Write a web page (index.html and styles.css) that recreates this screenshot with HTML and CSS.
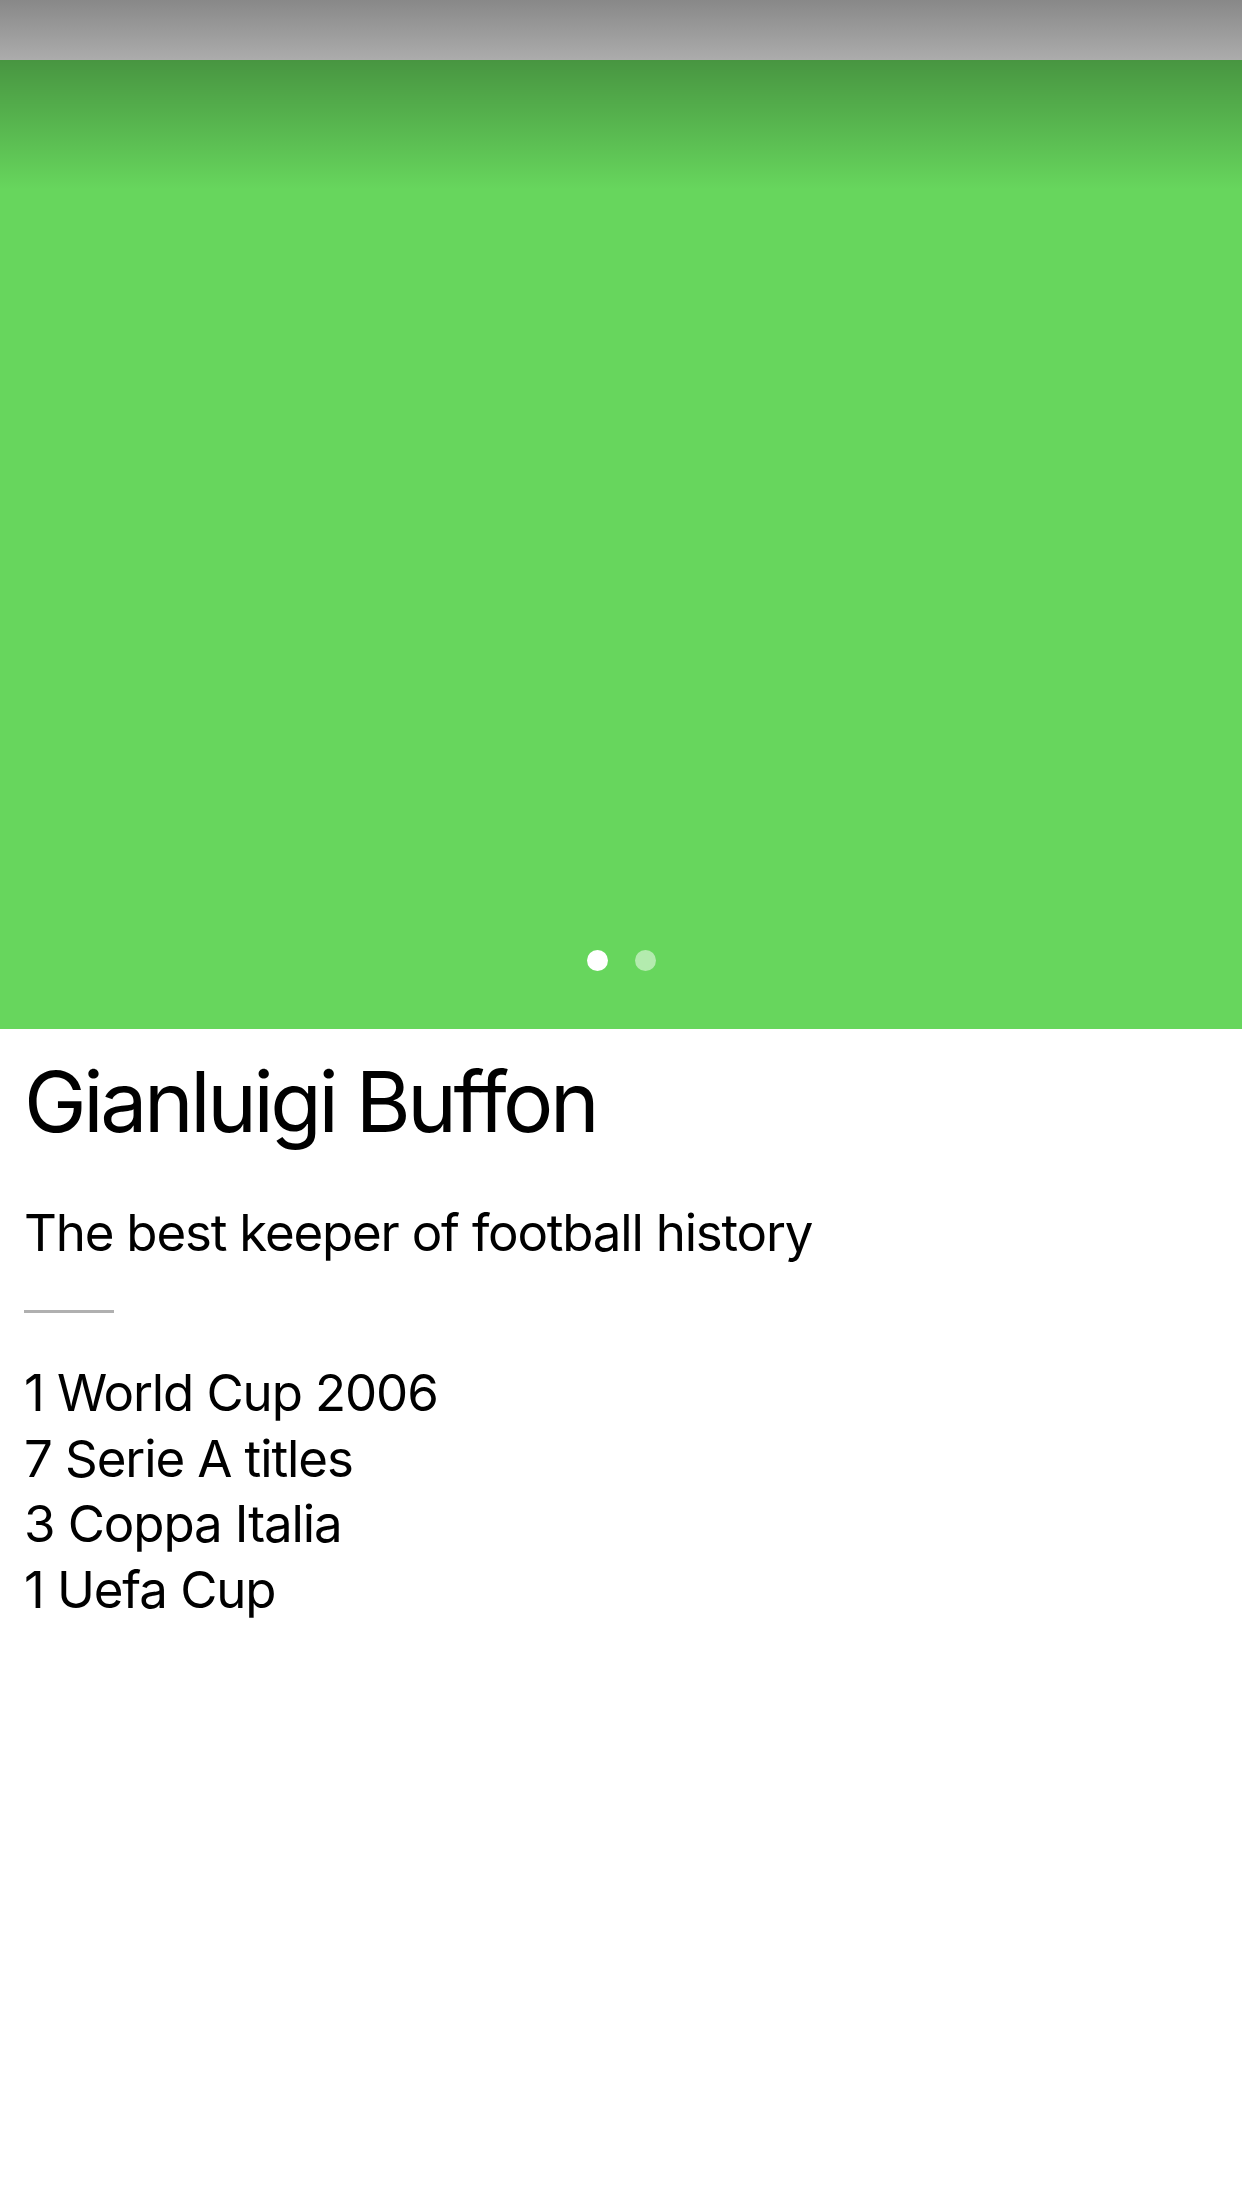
FILE: index.html
```html
<!DOCTYPE html>
<html lang="en">
<head>
<meta charset="utf-8">
<title>Gianluigi Buffon</title>
<link rel="stylesheet" href="styles.css">
</head>
<body>
  <div class="status-bar"></div>
  <section class="hero">
    <div class="hero-shade"></div>
    <div class="pager">
      <span class="dot dot-active"></span>
      <span class="dot"></span>
    </div>
  </section>
  <main class="content">
    <h1 class="title">Gianluigi Buffon</h1>
    <p class="subtitle">The best keeper of football history</p>
    <hr class="divider">
    <ul class="trophies">
      <li>1 World Cup 2006</li>
      <li>7 Serie A titles</li>
      <li>3 Coppa Italia</li>
      <li>1 Uefa Cup</li>
    </ul>
  </main>
</body>
</html>
```

FILE: styles.css
```css
html, body {
  margin: 0;
  padding: 0;
  background: #ffffff;
}

body {
  width: 1242px;
  min-height: 2208px;
  font-family: Inter, "Liberation Sans", Arial, sans-serif;
  color: #000;
}

.status-bar {
  height: 60px;
  background: linear-gradient(to bottom, #888888, #acacac);
}

.hero {
  position: relative;
  height: 969px;
  background: #67d65d;
  display: flex;
  flex-direction: column;
  justify-content: flex-end;
  align-items: center;
}

.hero-shade {
  position: absolute;
  left: 0;
  right: 0;
  top: 0;
  height: 130px;
  background: linear-gradient(to bottom, rgba(0,0,0,0.3), rgba(0,0,0,0));
}

.pager {
  display: flex;
  gap: 27px;
  margin-bottom: 58px;
}

.dot {
  width: 21px;
  height: 21px;
  border-radius: 50%;
  background: rgba(255,255,255,0.5);
}

.dot-active {
  background: #ffffff;
}

.content {
  padding: 0 24px;
}

.title {
  margin: 23px 0 0;
  font-size: 84px;
  font-weight: 400;
  line-height: 100px;
  letter-spacing: -3.4px;
}

.subtitle {
  margin: 50px 0 0;
  font-size: 51px;
  line-height: 62px;
  letter-spacing: -1.2px;
}

.divider {
  margin: 46px 0 0;
  width: 90px;
  height: 3px;
  border: 0;
  background: #b0b0b0;
}

.trophies {
  list-style: none;
  margin: 47px 0 0;
  padding: 0;
  font-size: 51px;
  line-height: 65.5px;
  letter-spacing: -1.1px;
}
```
